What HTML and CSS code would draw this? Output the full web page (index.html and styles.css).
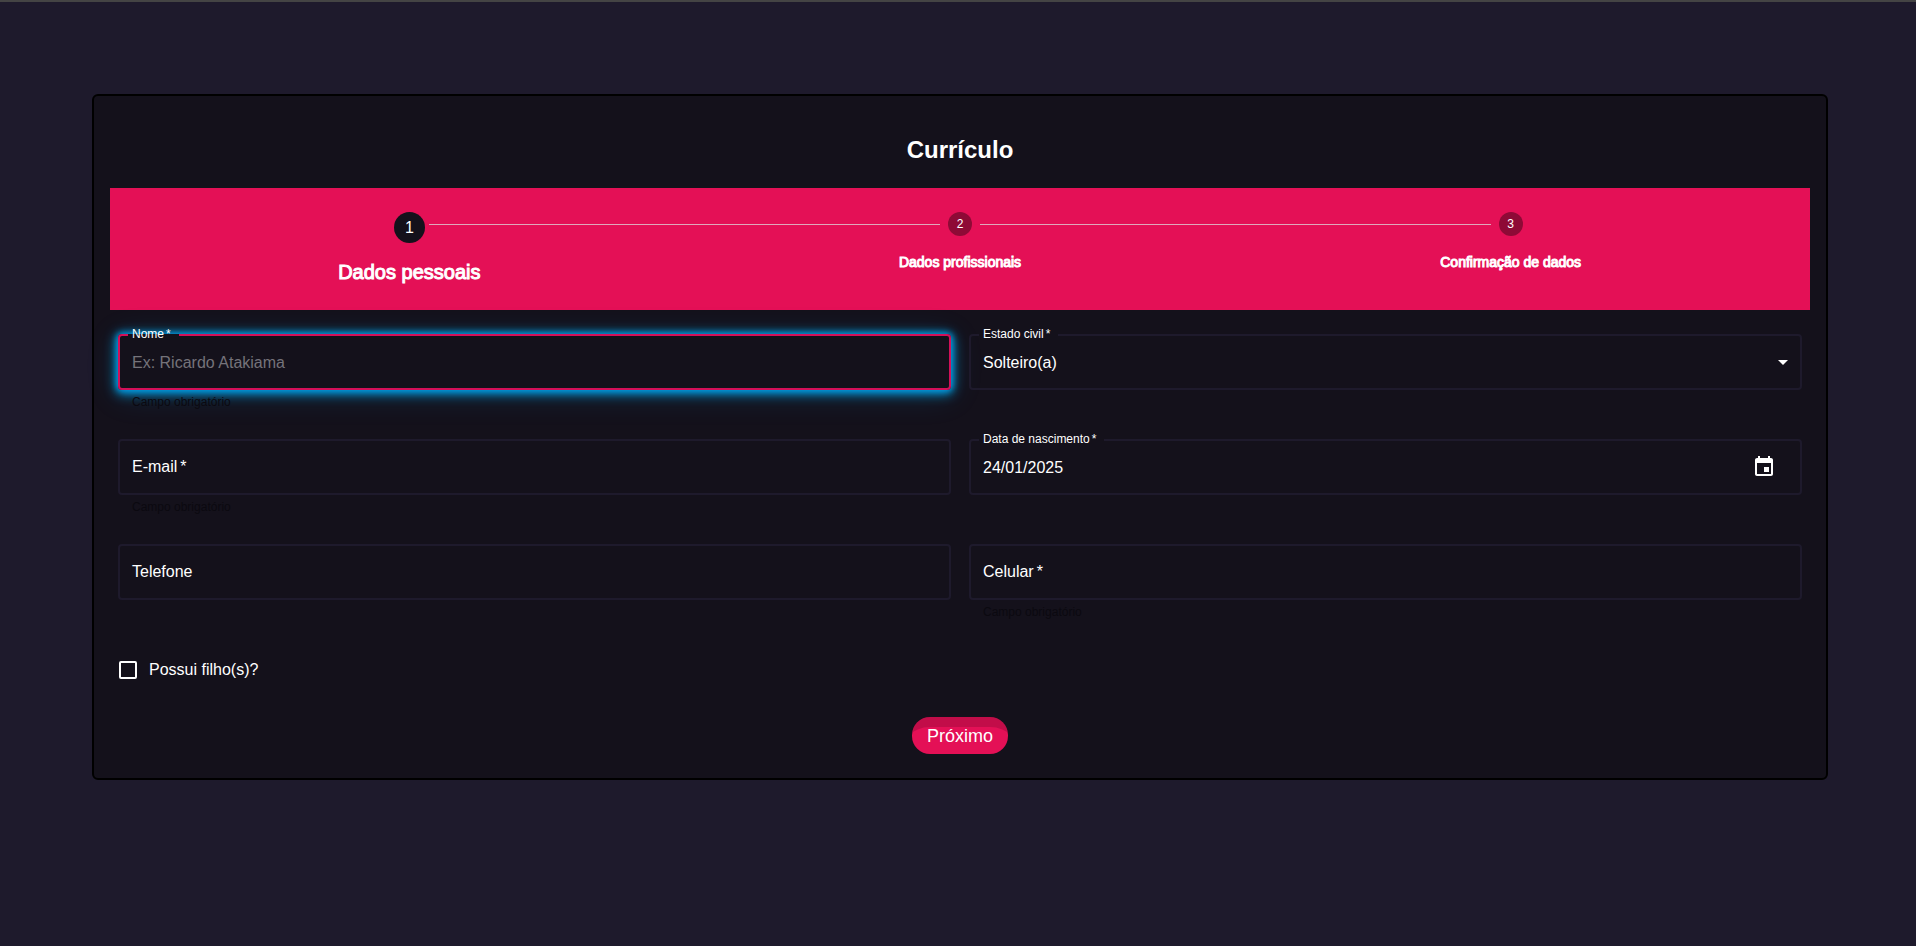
FILE: index.html
```html
<!DOCTYPE html>
<html lang="pt-BR">
<head>
<meta charset="utf-8">
<title>Currículo</title>
<link rel="stylesheet" href="styles.css">
</head>
<body>
<main class="card">
  <h1 class="title">Currículo</h1>
  <ol class="stepper">
    <li class="step step-active"><span class="step-icon">1</span><span class="step-label">Dados pessoais</span></li>
    <li class="step"><span class="step-icon">2</span><span class="step-label">Dados profissionais</span></li>
    <li class="step"><span class="step-icon">3</span><span class="step-label">Confirmação de dados</span></li>
  </ol>
  <form class="form">
    <div class="fields">
      <div class="field field-focused">
        <div class="control">
          <label class="label label-raised" for="nome">Nome<span class="star">*</span></label>
          <input class="input" id="nome" type="text" placeholder="Ex: Ricardo Atakiama">
          <fieldset class="outline" aria-hidden="true"><legend class="notch">Nome<span class="star">*</span></legend></fieldset>
        </div>
        <p class="helper">Campo obrigatório</p>
      </div>
      <div class="field">
        <div class="control">
          <label class="label label-raised" for="estado">Estado civil<span class="star">*</span></label>
          <select class="input" id="estado"><option>Solteiro(a)</option></select>
          <svg class="arrow" viewBox="0 0 24 24" aria-hidden="true"><path d="M7 10l5 5 5-5z"/></svg>
          <fieldset class="outline" aria-hidden="true"><legend class="notch">Estado civil<span class="star">*</span></legend></fieldset>
        </div>
      </div>
      <div class="field">
        <div class="control">
          <label class="label" for="email">E-mail<span class="star">*</span></label>
          <input class="input" id="email" type="email">
          <fieldset class="outline" aria-hidden="true"></fieldset>
        </div>
        <p class="helper">Campo obrigatório</p>
      </div>
      <div class="field">
        <div class="control">
          <label class="label label-raised" for="nascimento">Data de nascimento<span class="star">*</span></label>
          <input class="input" id="nascimento" type="text" value="24/01/2025">
          <button class="icon-button" type="button" aria-label="Escolher data"><svg class="icon" viewBox="0 0 24 24"><path d="M19 3h-1V1h-2v2H8V1H6v2H5c-1.110 0-1.990.9-1.990 2L3 19c0 1.100.89 2 2 2h14c1.100 0 2-.9 2-2V5c0-1.100-.9-2-2-2zm0 16H5V8h14v11zM12 12h5v5h-5z"/></svg></button>
          <fieldset class="outline" aria-hidden="true"><legend class="notch">Data de nascimento<span class="star">*</span></legend></fieldset>
        </div>
      </div>
      <div class="field">
        <div class="control">
          <label class="label" for="telefone">Telefone</label>
          <input class="input" id="telefone" type="tel">
          <fieldset class="outline" aria-hidden="true"></fieldset>
        </div>
      </div>
      <div class="field">
        <div class="control">
          <label class="label" for="celular">Celular<span class="star">*</span></label>
          <input class="input" id="celular" type="tel">
          <fieldset class="outline" aria-hidden="true"></fieldset>
        </div>
        <p class="helper">Campo obrigatório</p>
      </div>
    </div>
    <label class="check" for="filhos"><input class="checkbox" id="filhos" type="checkbox">Possui filho(s)?</label>
    <button class="next" type="button">Próximo</button>
  </form>
</main>
</body>
</html>
```
FILE: styles.css
```css
* { box-sizing: border-box; }

body {
  margin: 0;
  min-height: 100vh;
  padding: 92px 88px 92px 92px;
  border-top: 2px solid #444;
  background: #1e1a2c;
  color: #fff;
  font: 16px/24px "Liberation Sans", Arial, sans-serif;
}

.card {
  padding: 16px;
  border: 2px solid #000;
  border-radius: 6px;
  background: #14111b;
}

.title {
  margin: 20px 0;
  font-size: 24px;
  line-height: 36px;
  text-align: center;
}

.stepper {
  display: flex;
  margin: 0;
  padding: 24px;
  list-style: none;
  background: #e41056;
}

.step {
  position: relative;
  flex: 1;
  display: flex;
  flex-direction: column;
  align-items: center;
  gap: 16px;
}

/* Connector to the previous step */
.step + .step::before {
  content: "";
  position: absolute;
  top: 12px;
  left: calc(-50% + 20px);
  right: calc(50% + 20px);
  height: 1px;
  background: #dfa9bb;
}

.step-icon {
  width: 24px;
  height: 24px;
  border-radius: 50%;
  background: #8e0a36;
  font-size: 12px;
  line-height: 24px;
  text-align: center;
}

.step-label {
  font-size: 14px;
  line-height: 20px;
  -webkit-text-stroke: 1px #fff;
}

.step-active .step-icon {
  width: 31px;
  height: 31px;
  background: #14111b;
  font-size: 16px;
  line-height: 31px;
}

.step-active .step-label {
  font-size: 20px;
  line-height: 27px;
}

.form {
  display: flex;
  flex-direction: column;
  padding: 24px 8px 8px;
}

.fields {
  display: grid;
  grid-template-columns: 1fr 1fr;
  grid-auto-rows: 79px;
  gap: 26px 18px;
}

.control {
  position: relative;
  display: flex;
  align-items: center;
  height: 56px;
  border-radius: 4px;
}

.field-focused .control {
  box-shadow: 0 0 6px 1px #039be0, 0 2px 12px 2px #0390d0, 0 4px 32px #0390d033;
}

.input {
  flex: 1;
  min-width: 0;
  height: 56px;
  padding: 2px 14px 0;
  border: 0;
  outline: 0;
  appearance: none;
  background: transparent;
  color: #fff;
  font: inherit;
}

.input::placeholder { color: #75737a; }

.label {
  position: absolute;
  left: 14px;
  top: 16px;
  pointer-events: none;
}

.label-raised {
  top: -8px;
  font-size: 12px;
  line-height: 16px;
}

.star { padding-left: 3px; }
.label-raised .star, .notch .star { padding-left: 2px; }

.outline {
  position: absolute;
  inset: 0;
  margin: 0;
  padding: 0 8px;
  border: 2px solid #1e1a2c;
  border-radius: 4px;
  pointer-events: none;
}

/* The legend opens a gap in the border behind the raised label */
.outline:has(.notch) { top: -5px; }

.notch {
  height: 11px;
  padding: 0 8px 0 4px;
  font-size: 12px;
  line-height: 11px;
  visibility: hidden;
}

.field-focused .outline { border-color: #d41059; }

.helper {
  margin: 2px 14px 0;
  color: #0b0910;
  font-size: 12px;
  line-height: 20px;
}

/* Keeps the hint above the glow of the focused field */
.field-focused .helper { position: relative; }

.arrow {
  position: absolute;
  right: 7px;
  width: 24px;
  height: 24px;
  fill: #fff;
  pointer-events: none;
}

.icon-button {
  margin-right: 26px;
  padding: 0;
  border: 0;
  background: none;
}

.icon {
  display: block;
  width: 24px;
  height: 24px;
  fill: #fff;
}

.check {
  align-self: flex-start;
  display: flex;
  align-items: center;
  gap: 12px;
  margin-top: 35px;
  padding-left: 1px;
}

.checkbox {
  width: 18px;
  height: 18px;
  margin: 0;
  appearance: none;
  border: 2px solid #fff;
  border-radius: 2px;
}

.next {
  align-self: center;
  height: 37px;
  margin-top: 35px;
  padding: 0 15px;
  border: 0;
  border-radius: 18px;
  background: #e41056;
  box-shadow: inset 0 24px 0 -14px #00000026;
  color: #fff;
  font: inherit;
  font-size: 18px;
}
```
